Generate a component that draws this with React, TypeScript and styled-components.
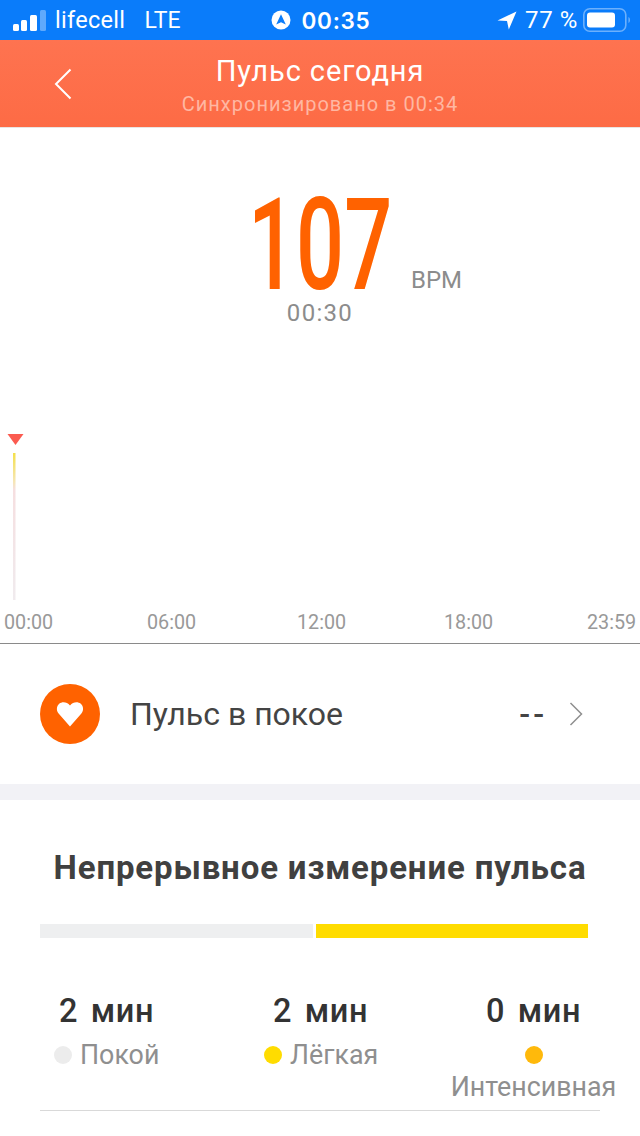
import React from 'react';
import styled, { createGlobalStyle } from 'styled-components';

const GlobalStyle = createGlobalStyle`
  html, body {
    margin: 0;
    padding: 0;
    background: #fff;
  }
  body {
    font-family: Inter, Roboto, "Noto Sans", sans-serif;
  }
`;

const Page = styled.div`
  width: 640px;
  height: 1136px;
  overflow: hidden;
  display: flex;
  flex-direction: column;
`;

const StatusBar = styled.div`
  height: 40px;
  flex: none;
  background: #0a7cfa;
  color: #fff;
  display: grid;
  grid-template-columns: 1fr auto 1fr;
  align-items: center;
  padding: 0 9px 0 13px;
  box-sizing: border-box;
  font-size: 22px;
`;

const StatusLeft = styled.div`
  display: flex;
  align-items: center;
`;

const Carrier = styled.span`
  margin-left: 9px;
  font-family: Roboto, sans-serif;
  font-size: 23.5px;
  letter-spacing: 0.3px;
`;

const Network = styled.span`
  margin-left: 19px;
  font-family: Roboto, sans-serif;
  font-size: 23px;
`;

const StatusCenter = styled.div`
  display: flex;
  align-items: center;
  gap: 11px;
  margin-left: -3px;
  font-weight: 600;
  font-size: 22.5px;
  letter-spacing: 0.7px;
`;

const StatusRight = styled.div`
  display: flex;
  align-items: center;
  justify-content: flex-end;
  font-family: Roboto, sans-serif;
  font-size: 24px;
  letter-spacing: 0.6px;
`;

const Percent = styled.span`
  margin: 0 5px 0 8px;
`;

const Header = styled.header`
  height: 88px;
  flex: none;
  background: linear-gradient(180deg, #fe7350 0%, #fd6b45 100%);
  border-bottom: 1px solid #e9e4e2;
  box-sizing: border-box;
  position: relative;
  color: #fff;
  display: flex;
  flex-direction: column;
  align-items: center;
  font-family: Roboto, sans-serif;
  padding-top: 14px;
`;

const BackIcon = styled.svg`
  position: absolute;
  left: 54px;
  top: 28px;
`;

const Title = styled.div`
  font-size: 29px;
  line-height: 34px;
  letter-spacing: 0.9px;
`;

const Subtitle = styled.div`
  margin-top: 3px;
  font-size: 20px;
  line-height: 26px;
  letter-spacing: 1px;
  color: #ffb7a2;
`;

const Hero = styled.section`
  height: 205px;
  flex: none;
  display: flex;
  flex-direction: column;
  align-items: center;
  position: relative;
`;

const BigValue = styled.div`
  margin-top: 62px;
  height: 110px;
  font-family: Roboto, sans-serif;
  font-size: 128px;
  font-weight: 500;
  line-height: 110px;
  color: #ff6200;
  transform: scaleX(0.66);
`;

const Unit = styled.span`
  position: absolute;
  left: 411px;
  top: 138px;
  font-family: Roboto, sans-serif;
  font-size: 24px;
  color: #8c8c8c;
`;

const Clock = styled.div`
  font-family: Roboto, sans-serif;
  font-size: 24px;
  line-height: 26px;
  letter-spacing: 1.3px;
  color: #8c8c8c;
`;

const Chart = styled.svg`
  display: block;
  flex: none;
  margin-top: 97px;
`;

const Axis = styled.div`
  flex: none;
  height: 38px;
  box-sizing: border-box;
  display: grid;
  grid-template-columns: 143px 150px 147px 143px 1fr;
  align-items: center;
  padding: 0 0 6px 4px;
  border-bottom: 1px solid #8a8a8a;
`;

const AxisLabel = styled.span`
  font-family: Roboto, sans-serif;
  font-size: 21px;
  color: #999;
  transform: scaleX(0.94);
  transform-origin: left center;
  white-space: nowrap;
`;

const RestRow = styled.div`
  flex: none;
  height: 140px;
  display: flex;
  align-items: center;
  padding: 0 57px 0 40px;
`;

const HeartCircle = styled.div`
  width: 60px;
  height: 60px;
  border-radius: 50%;
  background: #ff6200;
  display: flex;
  align-items: center;
  justify-content: center;
`;

const RestLabel = styled.div`
  margin-left: 30px;
  flex: 1;
  font-family: Roboto, sans-serif;
  font-size: 32px;
  color: #444;
`;

const RestValue = styled.div`
  font-family: Roboto, sans-serif;
  font-size: 32px;
  font-weight: 500;
  letter-spacing: 3px;
  color: #444;
  margin-right: 22px;
`;

const GapBand = styled.div`
  flex: none;
  height: 16px;
  background: #f2f2f6;
`;

const Card = styled.section`
  flex: 1;
  padding: 48px 40px 0;
  display: flex;
  flex-direction: column;
`;

const CardTitle = styled.h2`
  margin: 0;
  text-align: center;
  font-family: Roboto, sans-serif;
  font-size: 33px;
  line-height: 40px;
  font-weight: 700;
  letter-spacing: 0.85px;
  color: #404040;
  white-space: nowrap;
`;

const Bar = styled.div`
  margin-top: 36px;
  width: 548px;
  height: 14px;
  display: flex;
  gap: 3px;
`;

const BarPart = styled.div<{ $color: string }>`
  flex: 1;
  background: ${({ $color }) => $color};
`;

const Stats = styled.div`
  margin-top: 53px;
  display: grid;
  grid-template-columns: 134px 213px 1fr;
  height: 120px;
  border-bottom: 1px solid #d9d9d9;
  width: 560px;
  box-sizing: border-box;
`;

const Stat = styled.div`
  display: flex;
  flex-direction: column;
  align-items: flex-start;
`;

const Duration = styled.div<{ $left: number }>`
  margin-left: ${({ $left }) => $left}px;
  font-family: Roboto, sans-serif;
  font-size: 32.5px;
  line-height: 40px;
  font-weight: 500;
  letter-spacing: 0.6px;
  word-spacing: 4px;
  color: #333;
  white-space: nowrap;
`;

const Legend = styled.div<{ $left: number }>`
  margin: 8px 0 0 ${({ $left }) => $left}px;
  display: flex;
  align-items: center;
  gap: 8px;
  font-family: Roboto, sans-serif;
  font-size: 26.8px;
  line-height: 32px;
  color: #8f8f8f;
`;

const LegendWrap = styled(Legend)`
  flex-direction: column;
  gap: 0;
  width: 165px;
  white-space: nowrap;
`;

const Dot = styled.span<{ $color: string }>`
  flex: none;
  width: 18px;
  height: 18px;
  border-radius: 50%;
  background: ${({ $color }) => $color};
`;

const DotSlot = styled.span`
  height: 32px;
  display: flex;
  align-items: center;
`;

const axisTicks = ['00:00', '06:00', '12:00', '18:00', '23:59'];

const App: React.FC = () => (
  <Page>
    <GlobalStyle />
    <StatusBar>
      <StatusLeft>
        <svg width="33" height="21" viewBox="0 0 33 21">
          <rect x="0" y="14" width="6" height="7" rx="1.5" fill="#fff" />
          <rect x="8" y="10" width="6" height="11" rx="1.5" fill="#fff" />
          <rect x="17" y="5" width="7" height="16" rx="1.5" fill="#fff" />
          <rect x="27" y="0" width="6" height="21" rx="1.5" fill="#fff" opacity="0.35" />
        </svg>
        <Carrier>lifecell</Carrier>
        <Network>LTE</Network>
      </StatusLeft>
      <StatusCenter>
        <svg width="20" height="20" viewBox="0 0 20 20">
          <circle cx="10" cy="10" r="9.5" fill="#fff" />
          <path d="M10 4.2 L14.8 14.6 L10 12.2 L5.2 14.6 Z" fill="#0a7cfa" />
        </svg>
        00:35
      </StatusCenter>
      <StatusRight>
        <svg width="20" height="19" viewBox="0 0 20 19">
          <path d="M19.5 0.5 L11.8 18.5 L10 10 L0.5 9.5 Z" fill="#fff" />
        </svg>
        <Percent>77 %</Percent>
        <svg width="48" height="24" viewBox="0 0 48 24">
          <rect x="0.8" y="0.8" width="42" height="22.4" rx="6" fill="none" stroke="#fff" strokeOpacity="0.4" strokeWidth="1.6" />
          <rect x="4" y="4.5" width="28" height="15" rx="3" fill="#fff" />
          <path d="M45.5 9 C47.3 9.5 47.3 14.5 45.5 15 Z" fill="#fff" fillOpacity="0.45" />
        </svg>
      </StatusRight>
    </StatusBar>

    <Header>
      <BackIcon width="18" height="32" viewBox="0 0 18 32">
        <path d="M16.5 1.5 L2 16 L16.5 30.5" fill="none" stroke="#fff" strokeWidth="2" />
      </BackIcon>
      <Title>Пульс сегодня</Title>
      <Subtitle>Синхронизировано в 00:34</Subtitle>
    </Header>

    <Hero>
      <BigValue>107</BigValue>
      <Unit>BPM</Unit>
      <Clock>00:30</Clock>
    </Hero>

    <Chart width="640" height="176" viewBox="0 0 640 176">
      <defs>
        <linearGradient id="pulse" x1="0" y1="0" x2="0" y2="1">
          <stop offset="0" stopColor="#f4e04a" />
          <stop offset="0.2" stopColor="#f6e6b8" />
          <stop offset="0.25" stopColor="#f6dfe0" />
          <stop offset="1" stopColor="#f0ebee" />
        </linearGradient>
      </defs>
      <path d="M7.5 4 H23.5 L15.5 15 Z" fill="#fb5b50" />
      <rect x="13" y="23" width="2.5" height="147" fill="url(#pulse)" />
    </Chart>

    <Axis>
      {axisTicks.map((tick) => (
        <AxisLabel key={tick}>{tick}</AxisLabel>
      ))}
    </Axis>

    <RestRow>
      <HeartCircle>
        <svg width="28" height="26" viewBox="0 0 28 26">
          <path d="M14 25.5 L2.6 12.6 C0 9.6 0.6 5 3.2 2.8 C6.2 0.3 11 0.8 14 4.5 C17 0.8 21.8 0.3 24.8 2.8 C27.4 5 28 9.6 25.4 12.6 Z" fill="#fff" />
        </svg>
      </HeartCircle>
      <RestLabel>Пульс в покое</RestLabel>
      <RestValue>--</RestValue>
      <svg width="14" height="24" viewBox="0 0 14 24">
        <path d="M1.5 1 L12.5 12 L1.5 23" fill="none" stroke="#8f8f8f" strokeWidth="1.5" />
      </svg>
    </RestRow>

    <GapBand />

    <Card>
      <CardTitle>Непрерывное измерение пульса</CardTitle>
      <Bar>
        <BarPart $color="#eeeff0" />
        <BarPart $color="#ffdc00" />
      </Bar>
      <Stats>
        <Stat>
          <Duration $left={19}>2 мин</Duration>
          <Legend $left={14}>
            <Dot $color="#ececec" />
            Покой
          </Legend>
        </Stat>
        <Stat>
          <Duration $left={99}>2 мин</Duration>
          <Legend $left={90}>
            <Dot $color="#ffdc00" />
            Лёгкая
          </Legend>
        </Stat>
        <Stat>
          <Duration $left={99}>0 мин</Duration>
          <LegendWrap $left={64}>
            <DotSlot>
              <Dot $color="#ffb90b" />
            </DotSlot>
            Интенсивная
          </LegendWrap>
        </Stat>
      </Stats>
    </Card>
  </Page>
);

export default App;
